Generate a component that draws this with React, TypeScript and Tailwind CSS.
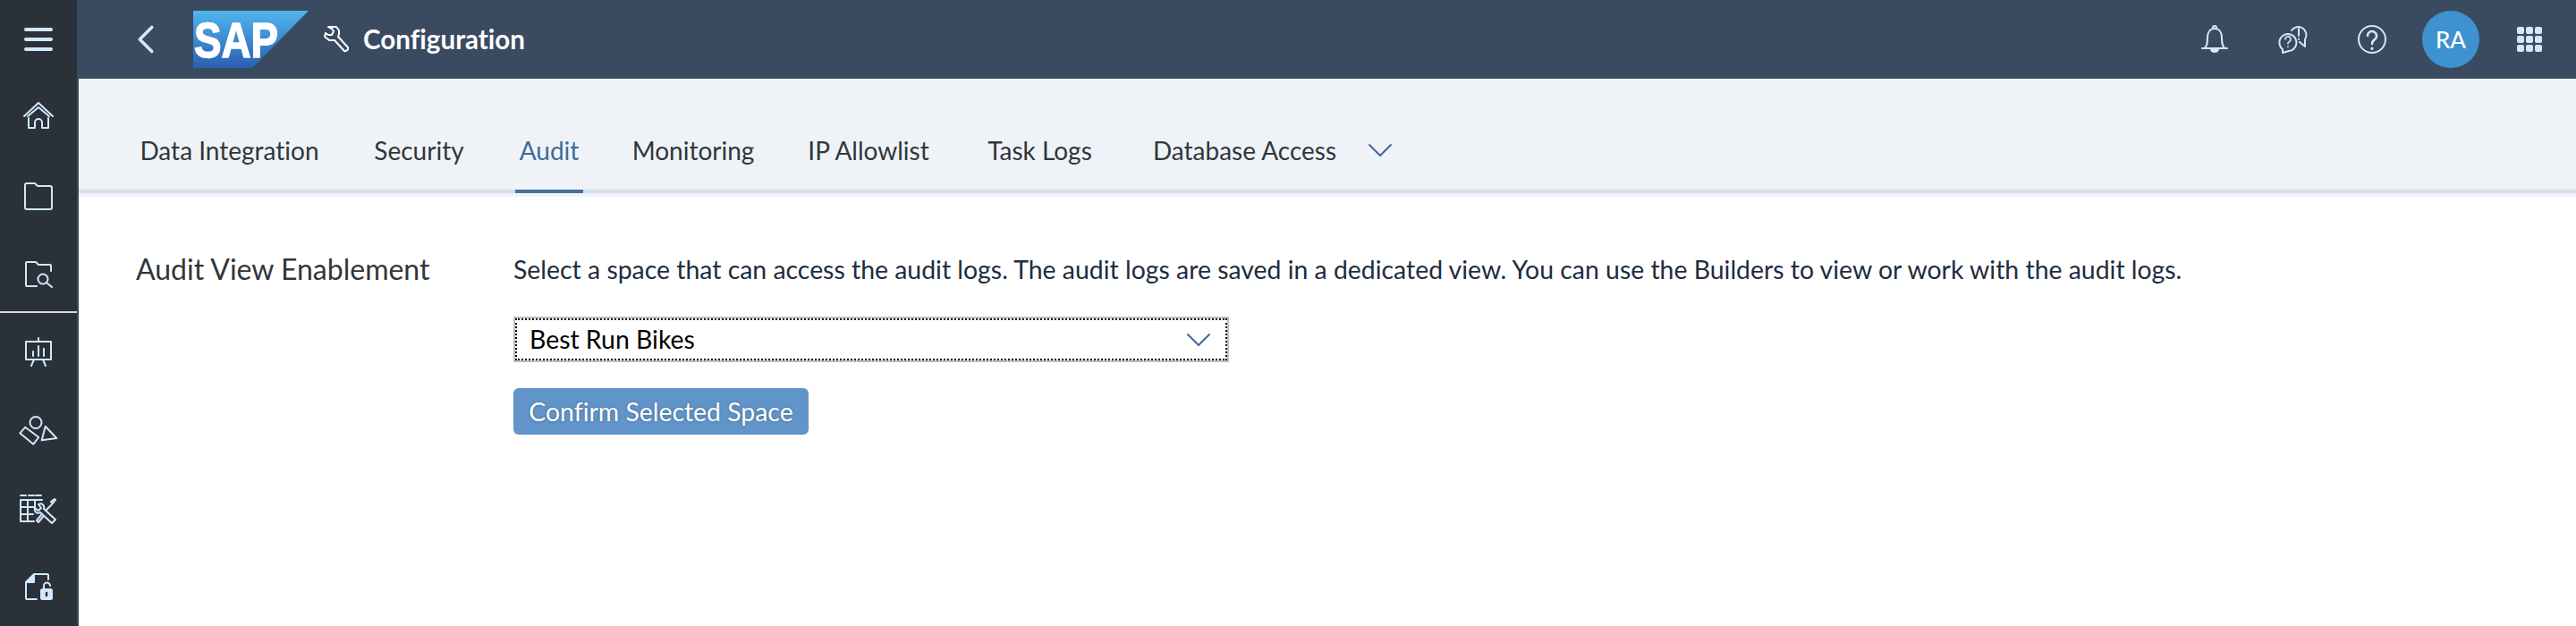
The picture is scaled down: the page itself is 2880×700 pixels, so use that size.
import { ChevronDown, ChevronLeft } from "lucide-react";
import type { ReactNode } from "react";

const tabs = [
  { label: "Data Integration", width: "w-[209px]" },
  { label: "Security", width: "w-[111px]" },
  { label: "Audit", width: "w-[76px]" },
  { label: "Monitoring", width: "w-[142px]" },
  { label: "IP Allowlist", width: "w-[146px]" },
  { label: "Task Logs", width: "w-[133px]" },
  { label: "Database Access", width: "w-[221px]" },
];

function Icon({ children, className = "text-[#d1e8ff]" }: { children: ReactNode; className?: string }) {
  return (
    <svg
      viewBox="0 0 32 32"
      fill="none"
      stroke="currentColor"
      strokeWidth="2"
      strokeLinecap="round"
      strokeLinejoin="round"
      className={`h-8 w-8 overflow-visible ${className}`}
    >
      {children}
    </svg>
  );
}

const railIcons = [
  <Icon key="home">
    <path d="M0 15 16 0l16 15M4 15 16 5l12 10" />
    <path d="M5 17v11h7v-6a4 4 0 0 1 8 0v6h7V17" />
  </Icon>,
  <Icon key="folder">
    <path d="M1 4a2 2 0 0 1 2-2h9l3 3h14a2 2 0 0 1 2 2v22a2 2 0 0 1-2 2H3a2 2 0 0 1-2-2z" />
  </Icon>,
  <Icon key="search">
    <path d="M14 30H3a1 1 0 0 1-1-1V4a1 1 0 0 1 1-1h10l3 3h13a1 1 0 0 1 1 1v6" />
    <circle cx="21" cy="22" r="5.5" />
    <path d="m25 26 6 5" />
  </Icon>,
  <Icon key="board">
    <path d="M16 0v4M2 4h28v20H2zM11 24l-3 7M21 24l3 7" />
    <path d="M10 20v-5M16 20V9M22 20v-8" />
  </Icon>,
  <Icon key="shapes">
    <circle cx="13" cy="7.500" r="6.500" />
    <path d="M1.300 12.700 16.300 24l-6 7.700-15-12.400z" />
    <path d="m23.700 11.700 12.600 13.300-16.600 2.300z" />
  </Icon>,
  <Icon key="table">
    <path d="M-4 1h6M5 1h6M13 1h6" />
    <path d="M20 6H-4v24h15M4 6v24M12 6v8M-4 14h16M-4 22h14" />
    <path d="m18 20 13 12 4-4-13-12c1-4-2-7-6-5l3 4-3 3-4-3c-1 4 2 7 6 5zM25 17l6-6M30 8l4-3 1 1-3 4z" />
    <path d="m21 25-5 6-2-2 5-6" />
  </Icon>,
  <Icon key="lock">
    <path d="M14 30H3a1 1 0 0 1-1-1V11L11 2h15a1 1 0 0 1 1 1v5" />
    <path d="M11 3 3 11h8z" fill="currentColor" />
    <rect x="19" y="19" width="12" height="11" rx="1.500" fill="currentColor" />
    <path d="M22 19v-4a3.500 3.500 0 0 1 7 0" />
    <path d="M25 23v3" stroke="#2a3138" strokeWidth="2.500" />
  </Icon>,
];

function ShellButton({ children }: { children: ReactNode }) {
  return <div className="flex h-[88px] w-[88px] items-center justify-center">{children}</div>;
}

export default function App() {
  return (
    <div className="flex h-[700px] w-[2880px] overflow-hidden bg-white font-['Lato',sans-serif] text-[28.4px] text-[#32363a] [font-variant-ligatures:none]">
      <aside className="flex w-[88px] shrink-0 flex-col border-r-2 border-[#3a4a60] bg-[#2a3138]">
        <div className="flex h-[88px] items-center justify-center">
          <div className="flex w-8 flex-col gap-[7px]">
            <div className="h-1 rounded-full bg-[#d1e8ff]" />
            <div className="h-1 rounded-full bg-[#d1e8ff]" />
            <div className="h-1 rounded-full bg-[#d1e8ff]" />
          </div>
        </div>
        {railIcons.slice(0, 3).map((icon, i) => (
          <div key={i} className="flex h-[88px] items-center justify-center">
            {icon}
          </div>
        ))}
        <div className="-mt-0.5 h-0.5 bg-[#d9d9d9]" />
        {railIcons.slice(3).map((icon, i) => (
          <div key={i} className="flex h-[88px] items-center justify-center">
            {icon}
          </div>
        ))}
      </aside>

      <div className="flex min-w-0 flex-1 flex-col">
        <header className="flex h-[88px] shrink-0 items-center bg-[#3a4a60] pr-2">
          <ChevronLeft className="ml-[48px] h-[54px] w-[54px] text-[#d1e8ff]" strokeWidth={1.6} />
          <svg viewBox="0 0 129 64" className="ml-[26px] h-16 w-[129px]">
            <defs>
              <linearGradient id="sapBlue" x1="0" y1="0" x2="0" y2="1">
                <stop offset="0" stopColor="#4fb6ee" />
                <stop offset="1" stopColor="#2b5eb2" />
              </linearGradient>
            </defs>
            <polygon points="0,0 129,0 66,64 0,64" fill="url(#sapBlue)" />
            <text
              x="1"
              y="52"
              fontFamily="'Liberation Sans',sans-serif"
              fontWeight="700"
              fontSize="56"
              fill="#fff"
              stroke="#fff"
              strokeWidth="1.500"
              textLength="94"
              lengthAdjust="spacingAndGlyphs"
            >
              SAP
            </text>
          </svg>
          <svg
            viewBox="0 0 28 32"
            fill="none"
            stroke="#fff"
            strokeWidth="2"
            strokeLinejoin="round"
            className="ml-[17px] h-8 w-7"
          >
            <path d="M8 2h6l3 4v4l-1 3 11 12c1 2-2 5-4 4L12 17H6l-5-4 1-4 3 2h4l2-4-2-3-4-2z" />
          </svg>
          <span className="ml-[16px] text-[29.6px] font-bold text-white">Configuration</span>
          <div className="ml-auto flex items-center">
            <ShellButton>
              <Icon>
                <path d="M2 26h28M5 26c3-4 3-7 3-12 0-6 3-10 8-10s8 4 8 10c0 5 0 8 3 12M14 3a2 2 0 0 1 4 0" />
                <path d="M12 27a4 3 0 0 0 8 0z" fill="currentColor" />
              </Icon>
            </ShellButton>
            <ShellButton>
              <Icon>
                <path d="M4 31v-4A9.500 9.500 0 1 1 11 29z" />
                <path d="M14 6a9 9 0 1 1 15 10v8l-6-5" />
                <path d="M22 4v8M22 15.500v.5" />
                <path d="M7 16a3 3 0 1 1 4.500 2.500L10 20v1M10 24v.5" strokeWidth="1.600" />
              </Icon>
            </ShellButton>
            <ShellButton>
              <Icon>
                <circle cx="16" cy="16" r="15" />
                <path d="M11 12a5 5 0 1 1 8 4c-2 1.500-3 2.500-3 5" strokeWidth="2.500" />
                <path d="M16 26v.5" strokeWidth="3" />
              </Icon>
            </ShellButton>
            <ShellButton>
              <div className="flex h-16 w-16 items-center justify-center rounded-full bg-[#3e92cf] text-[26px] font-medium text-white">
                RA
              </div>
            </ShellButton>
            <ShellButton>
              <div className="grid grid-cols-3 gap-[2px]">
                {Array.from({ length: 9 }).map((_, i) => (
                  <div key={i} className="h-2 w-2 rounded-[2px] bg-[#d1e8ff]" />
                ))}
              </div>
            </ShellButton>
          </div>
        </header>

        <nav className="flex h-[132px] shrink-0 items-end border-b-4 border-[#eff3f8] bg-[#eff3f8] text-[28px]">
          <div className="flex w-full items-stretch border-b-4 border-[#d5dfeb] pl-[64px]">
            {tabs.map((tab) => (
              <div
                key={tab.label}
                className={`relative mr-[52px] flex h-[84px] items-center justify-center whitespace-nowrap pb-1 ${tab.width} ${tab.label === "Audit" ? "text-[#3f6a99]" : ""}`}
              >
                {tab.label}
                {tab.label === "Audit" && <div className="absolute inset-x-0 -bottom-1 h-1 bg-[#4b7099]" />}
              </div>
            ))}
            <div className="-ml-[35px] flex items-center pb-1">
              <ChevronDown className="h-12 w-12 text-[#44688f]" strokeWidth={1} />
            </div>
          </div>
        </nav>

        <main className="flex flex-1 pt-[62px] pl-[64px]">
          <div className="w-[422px] shrink-0 text-[32px] leading-[38px]">Audit View Enablement</div>
          <div className="flex flex-col items-start">
            <p className="leading-[38px] text-[#1d2d3e]">
              Select a space that can access the audit logs. The audit logs are saved in a dedicated view. You can use the Builders to view or work with the audit logs.
            </p>
            <div className="mt-[34px] w-[800px] border-2 border-[#bfbfbf]">
              <div className="flex h-[47px] items-center justify-between border-2 border-dotted border-black pr-[6px] pl-[14px] text-black">
                <span>Best Run Bikes</span>
                <ChevronDown className="h-12 w-12 text-[#44688f]" strokeWidth={1} />
              </div>
            </div>
            <button className="mt-[29px] flex h-[52px] w-[330px] items-center justify-center rounded-[6px] bg-[#6194c8] text-white [text-shadow:0_0_3px_#0000004d]">
              Confirm Selected Space
            </button>
          </div>
        </main>
      </div>
    </div>
  );
}
